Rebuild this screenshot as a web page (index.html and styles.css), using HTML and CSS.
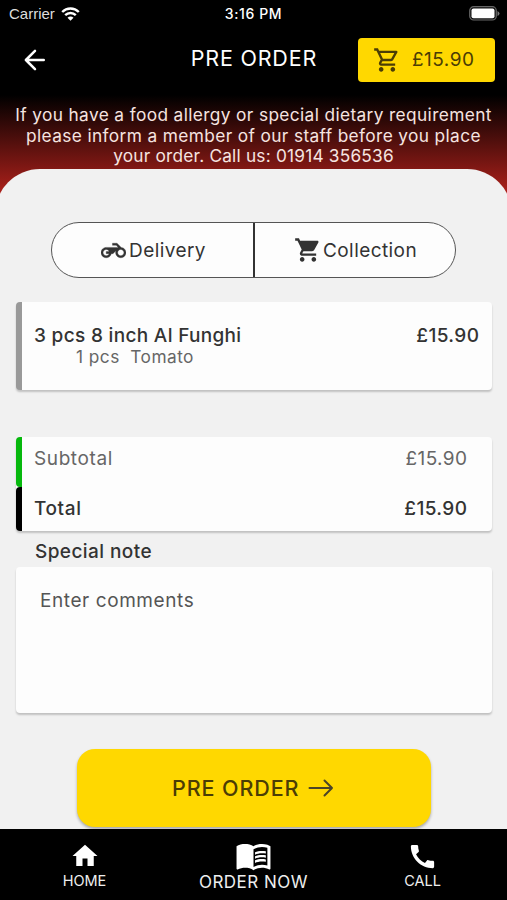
FILE: index.html
```html
<!DOCTYPE html>
<html lang="en">
<head>
<meta charset="utf-8">
<title>Pre order</title>
<link rel="stylesheet" href="styles.css">
</head>
<body>
<div class="status">
  <div class="carrier"><span>Carrier</span>
    <svg width="19" height="14" viewBox="0 0 19 14" fill="none" stroke="#fff" stroke-width="2.4"><path d="M1.2 5C5.8.4 13.2.4 17.8 5M4.2 8.2c3-3 7.6-3 10.6 0"/><path d="M9.5 13.8 6.5 10.8c1.700-1.600 4.300-1.600 6 0z" fill="#fff" stroke="none"/></svg>
  </div>
  <span class="clock">3:16 PM</span>
  <svg class="battery" width="31" height="15" viewBox="0 0 31 15"><rect x=".7" y=".7" width="26.6" height="13.3" rx="4" fill="#111" stroke="#666" stroke-width="1.2"/><rect x="2.5" y="2.5" width="23" height="9.8" rx="2" fill="#fff"/><path d="M28.5 5v5q2-1 2-2.5t-2-2.5z" fill="#777"/></svg>
</div>
<header class="top">
  <svg class="back" width="30" height="30" viewBox="0 0 24 24" fill="none" stroke="#fff" stroke-width="2" stroke-linecap="round" stroke-linejoin="round"><path d="M19 12H4.700M12 4.700 4.700 12 12 19.300"/></svg>
  <h1 class="title">PRE ORDER</h1>
  <div class="basket">
    <svg width="28" height="28" viewBox="0 0 24 24" fill="#4b3d05"><path d="M15.550 13c.75 0 1.410-.41 1.750-1.030l3.580-6.490C21.250 4.820 20.770 4 20.010 4H5.210l-.94-2H1v2h2l3.600 7.590-1.350 2.440C4.520 15.370 5.480 17 7 17h12v-2H7l1.100-2h7.450zM6.160 6h12.150l-2.760 5H8.530L6.160 6zM7 18c-1.100 0-1.990.9-1.990 2S5.900 22 7 22s2-.9 2-2-.9-2-2-2zm10 0c-1.100 0-1.990.9-1.990 2s.89 2 1.990 2 2-.9 2-2-.9-2-2-2z"/></svg>
    <span>£15.90</span>
  </div>
</header>
<p class="notice"><span>If you have a food allergy or special dietary requirement</span><span>please inform a member of our staff before you place</span><span class="phone">your order. Call us: 01914 356536</span></p>
<main class="sheet">
  <div class="modes">
    <div class="mode delivery">
      <svg width="25" height="25" viewBox="0 0 24 24" fill="#333" stroke="#333" stroke-width=".3"><path d="M19.440 9.030L15.410 5H11v2h3.590l2 2H5c-2.800 0-5 2.200-5 5s2.200 5 5 5c2.460 0 4.450-1.690 4.900-4h1.650l2.770-2.770c-.21.54-.32 1.140-.32 1.770 0 2.800 2.200 5 5 5s5-2.200 5-5c0-2.650-1.970-4.770-4.560-4.970zM7.820 15C7.400 16.150 6.280 17 5 17c-1.630 0-3-1.370-3-3s1.370-3 3-3c1.280 0 2.400.85 2.820 2H5v2h2.820zM19 17c-1.660 0-3-1.340-3-3s1.340-3 3-3 3 1.340 3 3-1.340 3-3 3z"/></svg>
      <span>Delivery</span>
    </div>
    <div class="mode collection">
      <svg width="28" height="28" viewBox="0 0 24 24" fill="#333"><path d="M7 18c-1.100 0-1.990.9-1.990 2S5.900 22 7 22s2-.9 2-2-.9-2-2-2zM1 2v2h2l3.600 7.590-1.350 2.450c-.16.28-.25.61-.25.96 0 1.100.9 2 2 2h12v-2H7.420c-.14 0-.25-.11-.25-.25l.03-.12.9-1.630h7.450c.75 0 1.410-.41 1.750-1.030l3.580-6.490c.08-.14.12-.31.12-.48 0-.55-.45-1-1-1H5.210l-.94-2H1zm16 16c-1.100 0-1.990.9-1.990 2s.89 2 1.990 2 2-.9 2-2-.9-2-2-2z"/></svg>
      <span>Collection</span>
    </div>
  </div>
  <section class="card item">
    <div class="item-text"><div class="name">3 pcs 8 inch Al Funghi</div><div class="extra">1 pcs&nbsp; Tomato</div></div>
    <div class="price">£15.90</div>
  </section>
  <section class="card totals">
    <div class="row sub"><span>Subtotal</span><span class="price">£15.90</span></div>
    <div class="row total"><span>Total</span><span class="price">£15.90</span></div>
  </section>
  <div class="note-label"><span>Special note</span></div>
  <div class="card comments"><span>Enter comments</span></div>
  <div class="submit">
    <span>PRE ORDER</span>
    <svg width="26" height="18" viewBox="0 0 26 18" fill="none" stroke="#4b4528" stroke-width="2" stroke-linecap="round" stroke-linejoin="round"><path d="M1.500 9H24M16.500 1.500 24 9l-7.500 7.500"/></svg>
  </div>
</main>
<nav class="nav">
  <div class="tab"><svg class="home-icon" width="30" height="30" viewBox="0 0 24 24" fill="#fff"><path d="M10 20v-6h4v6h5v-8h3L12 3 2 12h3v8z"/></svg><span class="home">HOME</span></div>
  <div class="tab"><svg class="book-icon" width="37" height="37" viewBox="0 0 24 24" fill="#fff"><path d="M21 5c-1.110-.35-2.330-.5-3.500-.5-1.950 0-4.050.4-5.500 1.500-1.450-1.100-3.550-1.500-5.500-1.500S2.450 4.900 1 6v14.650c0 .25.25.5.5.5.1 0 .15-.05.25-.05C3.100 20.450 5.050 20 6.500 20c1.950 0 4.050.4 5.500 1.500 1.350-.85 3.800-1.500 5.500-1.500 1.650 0 3.350.3 4.750 1.050.1.05.15.05.25.05.25 0 .5-.25.5-.5V6c-.6-.45-1.250-.75-2-1zm0 13.500c-1.100-.35-2.300-.5-3.500-.5-1.700 0-4.150.65-5.500 1.500V8c1.350-.85 3.800-1.500 5.500-1.500 1.200 0 2.400.15 3.500.5v11.500z"/><path d="M17.500 10.500c.88 0 1.730.09 2.500.26V9.240c-.79-.15-1.640-.24-2.500-.24-1.700 0-3.240.29-4.500.83v1.660c1.130-.64 2.700-.99 4.500-.99zM13 12.490v1.660c1.130-.64 2.700-.99 4.500-.99.88 0 1.730.09 2.500.26V11.900c-.79-.15-1.640-.24-2.500-.24-1.700 0-3.240.3-4.500.83zM17.500 14.330c-1.700 0-3.240.29-4.500.83v1.660c1.130-.64 2.700-.99 4.500-.99.88 0 1.730.09 2.500.26v-1.520c-.79-.16-1.640-.24-2.500-.24z"/></svg><span class="order">ORDER NOW</span></div>
  <div class="tab"><svg class="call-icon" width="31" height="31" viewBox="0 0 24 24" fill="#fff"><path d="M20.010 15.380c-1.230 0-2.420-.2-3.530-.56-.35-.12-.74-.03-1.010.24l-1.570 1.970c-2.830-1.350-5.480-3.900-6.890-6.830l1.950-1.660c.27-.28.35-.67.24-1.020-.37-1.110-.56-2.300-.56-3.530 0-.54-.45-.99-.99-.99H4.190C3.650 3 3 3.240 3 3.990 3 13.280 10.730 21 20.010 21c.71 0 .99-.63.99-1.180v-3.450c0-.54-.45-.99-.99-.99z"/></svg><span class="call">CALL</span></div>
</nav>
</body>
</html>
```
FILE: styles.css
```css
* { box-sizing: border-box; margin: 0; }
body {
  width: 507px; height: 900px; overflow: hidden;
  display: flex; flex-direction: column;
  font-family: Inter, "Liberation Sans", sans-serif;
  font-size: 19px; line-height: 20px; color: #333; white-space: nowrap;
  background: linear-gradient(#000 95px, #b5221c 198px);
}
svg { display: block; flex: none; }
.status { display: grid; grid-template-columns: 1fr auto 1fr; align-items: center; height: 28px; padding: 0 7px; color: #fff; }
.carrier { display: flex; align-items: center; gap: 6px; padding-left: 2px; margin-top: -1px; font: 15px/20px "Liberation Sans", sans-serif; color: #ddd; }
.clock { font-size: 14px; font-weight: 500; letter-spacing: .6px; }
.battery { justify-self: end; margin-top: -2px; }
.top { display: grid; grid-template-columns: 1fr auto 1fr; align-items: center; height: 64px; padding: 0 12px; color: #fff; }
.back { margin-left: 8px; }
.title { font-size: 21.5px; font-weight: 400; line-height: 24px; letter-spacing: .8px; margin: -4px -.8px 0 0; }
.basket { justify-self: end; display: flex; align-items: center; gap: 11px; width: 137px; height: 44px; padding-left: 15px; border-radius: 4px; background: #ffd800; color: #4b3d05; font-size: 19px; letter-spacing: .5px; }
.notice { display: flex; flex-direction: column; align-items: center; height: 77px; padding-top: 13px; font-size: 17.3px; line-height: 20.7px; letter-spacing: .37px; color: #f6e4e0; }
.phone { letter-spacing: .2px; }
.sheet { display: flex; flex-direction: column; height: 660px; margin: 0 -5px; padding: 53px 20px 0; border-radius: 45px 45px 0 0; background: #f1f1f1; }
.modes { display: flex; width: 405px; height: 56px; margin-left: 36px; border: 1.5px solid #555; border-radius: 28px; background: #fdfdfd; font-size: 19px; letter-spacing: .42px; }
.mode { display: flex; align-items: center; }
.mode span { padding-top: 1px; }
.delivery { width: 203px; padding-left: 49px; gap: 3px; border-right: 2px solid #333; }
.collection { padding-left: 39px; gap: 1px; }
.card { border-radius: 4px; background: #fdfdfd; box-shadow: 0 2px 2px rgba(0,0,0,.2); margin: 0 0 0 1px; width: 476px; }
.price { letter-spacing: .4px; margin-right: -.4px; }
.item { display: flex; justify-content: space-between; height: 88px; margin-top: 24px; padding: 24px 13px 0 12px; border-left: 6px solid #999; font-weight: 450; }
.name { line-height: 20px; letter-spacing: .32px; }
.extra { padding-left: 42px; margin-top: 1px; font-size: 17.3px; font-weight: 400; letter-spacing: .45px; color: #666; }
.totals { height: 94px; margin-top: 47px; }
.row { display: flex; justify-content: space-between; align-items: center; border-left: 6px solid #000; border-radius: 4px; padding: 0 25px 0 12px; letter-spacing: .6px; }
.sub { height: 50px; padding-bottom: 6px; border-color: #06b80d; color: #666; }
.total { height: 44px; font-weight: 450; }
.note-label { height: 36px; padding: 11px 0 0 20px; font-weight: 450; letter-spacing: .42px; }
.comments { height: 146px; padding: 24px; color: #555; letter-spacing: .58px; }
.submit { display: flex; align-items: center; gap: 9px; width: 354px; height: 78px; margin: 36px 0 0 62px; padding-left: 95px; border-radius: 18px; background: #ffd800; color: #4b3d05; font-size: 21.5px; font-weight: 500; letter-spacing: .9px; box-shadow: 0 2px 3px rgba(0,0,0,.3); }
.nav { display: grid; grid-template-columns: repeat(3, 1fr); height: 71px; background: #000; color: #eee; }
.tab { display: flex; flex-direction: column; align-items: center; font-size: 14.5px; }
.home-icon, .call-icon { margin-top: 12px; }
.book-icon { margin-top: 8px; }
.order { font-size: 17px; margin-top: -2px; letter-spacing: .5px; }
.call { margin-top: -1px; }
```
